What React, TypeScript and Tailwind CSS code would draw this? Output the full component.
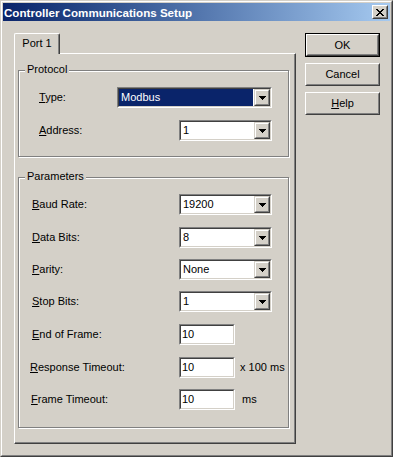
import type { ReactNode } from "react";

// Win2000-style dialog: "Controller Communications Setup"

function Sunken({ className, children }: { className: string; children: ReactNode }) {
  return (
    <div className={`border border-t-[#808080] border-l-[#808080] border-r-white border-b-white ${className}`}>
      <div className="flex h-full w-full border border-t-[#404040] border-l-[#404040] border-r-[#d4d0c8] border-b-[#d4d0c8] bg-white">
        {children}
      </div>
    </div>
  );
}

function DownArrow() {
  return (
    <svg width="7" height="4" viewBox="0 0 7 4" shapeRendering="crispEdges">
      <rect x="0" y="0" width="7" height="1" fill="#000" />
      <rect x="1" y="1" width="5" height="1" fill="#000" />
      <rect x="2" y="2" width="3" height="1" fill="#000" />
      <rect x="3" y="3" width="1" height="1" fill="#000" />
    </svg>
  );
}

function DropButton() {
  return (
    <div className="h-full w-[16px] border border-t-[#d4d0c8] border-l-[#d4d0c8] border-r-[#404040] border-b-[#404040] bg-[#d4d0c8]">
      <div className="flex h-full w-full items-center justify-center border border-t-white border-l-white border-r-[#808080] border-b-[#808080]">
        <DownArrow />
      </div>
    </div>
  );
}

function Combo({ value, width, selected }: { value: string; width: string; selected?: boolean }) {
  return (
    <Sunken className={`h-[21px] ${width}`}>
      <div className="flex flex-1 items-stretch pr-[1px]">
        {selected ? (
          <span className="flex flex-1 items-center bg-[#0a246a] pl-[2px] text-white">{value}</span>
        ) : (
          <span className="flex items-center pl-[2px]">{value}</span>
        )}
      </div>
      <DropButton />
    </Sunken>
  );
}

function Edit({ value }: { value: string }) {
  return (
    <Sunken className="h-[21px] w-[56px]">
      <span className="flex items-center pl-[1px]">{value}</span>
    </Sunken>
  );
}

function Button({ children, isDefault }: { children: ReactNode; isDefault?: boolean }) {
  const bevel = (
    <div className="h-full w-full border border-t-white border-l-white border-r-[#404040] border-b-[#404040]">
      <div className="flex h-full w-full items-center justify-center border border-t-[#d4d0c8] border-l-[#d4d0c8] border-r-[#808080] border-b-[#808080]">
        {children}
      </div>
    </div>
  );
  if (isDefault) {
    return <div className="h-[24px] w-[75px] border border-black">{bevel}</div>;
  }
  return <div className="h-[23px] w-[75px]">{bevel}</div>;
}

function Group({ label, className, children }: { label: string; className: string; children: ReactNode }) {
  return (
    <div className={`relative border border-[#808080] shadow-[inset_1px_1px_0_#fff,1px_1px_0_#fff] ${className}`}>
      <span className="absolute -top-[8px] left-[6px] bg-[#d4d0c8] px-[2px] leading-[13px]">{label}</span>
      {children}
    </div>
  );
}

function Label({ k, rest, width }: { k: string; rest: string; width: string }) {
  return (
    <span className={`shrink-0 ${width}`}>
      <u>{k}</u>
      {rest}
    </span>
  );
}

function CloseGlyph() {
  const px: [number, number, number][] = [
    [0, 0, 2], [6, 0, 2],
    [1, 1, 2], [5, 1, 2],
    [2, 2, 4],
    [3, 3, 2],
    [2, 4, 4],
    [1, 5, 2], [5, 5, 2],
    [0, 6, 2], [6, 6, 2],
  ];
  return (
    <svg width="8" height="7" viewBox="0 0 8 7" shapeRendering="crispEdges">
      {px.map(([x, y, w], i) => (
        <rect key={i} x={x} y={y} width={w} height={1} fill="#000" />
      ))}
    </svg>
  );
}

export default function App() {
  return (
    <div className="h-[457px] w-[393px] border border-t-[#d4d0c8] border-l-[#d4d0c8] border-r-[#404040] border-b-[#404040] bg-[#d4d0c8] font-['Liberation_Sans',Arial,sans-serif] text-[11px] leading-[13px] text-black">
      <div className="h-full w-full border border-t-white border-l-white border-r-[#808080] border-b-[#808080] p-[1px]">
        {/* Title bar */}
        <div className="flex h-[18px] items-center bg-linear-to-r from-[#0a246a] to-[#a6caf0] pl-[1px] pr-[2px]">
          <span className="flex-1 text-[11.6px] font-bold text-white">Controller Communications Setup</span>
          <div className="h-[14px] w-[16px] border border-t-white border-l-white border-r-[#404040] border-b-[#404040] bg-[#d4d0c8]">
            <div className="flex h-full w-full items-center justify-center border border-t-[#d4d0c8] border-l-[#d4d0c8] border-r-[#808080] border-b-[#808080]">
              <CloseGlyph />
            </div>
          </div>
        </div>

        {/* Client area */}
        <div className="flex items-start pl-[11px] pt-[12px]">
          <div className="flex w-[282px] flex-col">
            <div className="relative z-10 -mb-[1px] flex h-[21px] w-[46px] items-center justify-center rounded-t-[2px] border-t border-l border-r border-t-white border-l-white border-r-[#404040] bg-[#d4d0c8] pb-[2px] shadow-[inset_-1px_0_0_#808080]">
              Port 1
            </div>
            <div className="h-[391px] w-[282px] border border-t-white border-l-white border-r-[#404040] border-b-[#404040] pl-[3px] pt-[16px] shadow-[inset_-1px_-1px_0_#808080]">
              <Group label="Protocol" className="h-[87px] w-[271px] pt-[16px]">
                <div className="flex h-[21px] items-center pl-[20px]">
                  <Label k="T" rest="ype:" width="w-[78px]" />
                  <Combo value="Modbus" width="w-[155px]" selected />
                </div>
                <div className="mt-[12px] flex h-[21px] items-center pl-[20px]">
                  <Label k="A" rest="ddress:" width="w-[140px]" />
                  <Combo value="1" width="w-[93px]" />
                </div>
              </Group>

              <Group label="Parameters" className="mt-[20px] h-[251px] w-[271px] pt-[16px]">
                <div className="flex h-[21px] items-center pl-[13px]">
                  <Label k="B" rest="aud Rate:" width="w-[147px]" />
                  <Combo value="19200" width="w-[93px]" />
                </div>
                <div className="mt-[12px] flex h-[21px] items-center pl-[13px]">
                  <Label k="D" rest="ata Bits:" width="w-[147px]" />
                  <Combo value="8" width="w-[93px]" />
                </div>
                <div className="mt-[11px] flex h-[21px] items-center pl-[13px]">
                  <Label k="P" rest="arity:" width="w-[147px]" />
                  <Combo value="None" width="w-[93px]" />
                </div>
                <div className="mt-[11px] flex h-[21px] items-center pl-[13px]">
                  <Label k="S" rest="top Bits:" width="w-[147px]" />
                  <Combo value="1" width="w-[93px]" />
                </div>
                <div className="mt-[12px] flex h-[21px] items-center pl-[13px]">
                  <Label k="E" rest="nd of Frame:" width="w-[147px]" />
                  <Edit value="10" />
                </div>
                <div className="mt-[12px] flex h-[21px] items-center pl-[11px]">
                  <Label k="R" rest="esponse Timeout:" width="w-[149px]" />
                  <Edit value="10" />
                  <span className="ml-[5px]">x 100 ms</span>
                </div>
                <div className="mt-[11px] flex h-[21px] items-center pl-[12px]">
                  <Label k="F" rest="rame Timeout:" width="w-[148px]" />
                  <Edit value="10" />
                  <span className="ml-[7px]">ms</span>
                </div>
              </Group>
            </div>
          </div>

          <div className="ml-[9px] flex flex-col">
            <Button isDefault>OK</Button>
            <div className="mt-[6px]">
              <Button>Cancel</Button>
            </div>
            <div className="mt-[6px]">
              <Button>
                <span>
                  <u>H</u>elp
                </span>
              </Button>
            </div>
          </div>
        </div>
      </div>
    </div>
  );
}
